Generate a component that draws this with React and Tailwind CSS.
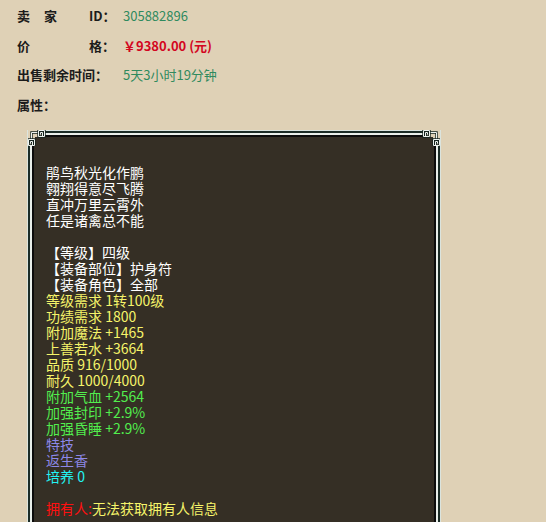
import React from 'react';

const BG = '#DFD1B6';

const poem = ['鹃鸟秋光化作鹏', '翱翔得意尽飞腾', '直冲万里云霄外', '任是诸禽总不能'];

const attrs = [
    { t: '', c: 'text-white' },
    { t: '【等级】四级', c: 'text-white' },
    { t: '【装备部位】护身符', c: 'text-white' },
    { t: '【装备角色】全部', c: 'text-white' },
    { t: '等级需求 1转100级', c: 'text-[#f6f46a]' },
    { t: '功绩需求 1800', c: 'text-[#f6f46a]' },
    { t: '附加魔法 +1465', c: 'text-[#f6f46a]' },
    { t: '上善若水 +3664', c: 'text-[#f6f46a]' },
    { t: '品质 916/1000', c: 'text-[#f6f46a]' },
    { t: '耐久 1000/4000', c: 'text-[#f6f46a]' },
    { t: '附加气血 +2564', c: 'text-[#52ee4e]' },
    { t: '加强封印 +2.9%', c: 'text-[#52ee4e]' },
    { t: '加强昏睡 +2.9%', c: 'text-[#52ee4e]' },
    { t: '特技', c: 'text-[#8d88e8]' },
    { t: '返生香', c: 'text-[#8d88e8]' },
    { t: '培养 0', c: 'text-[#22f4f4]' },
    { t: '', c: 'text-white' },
];

function Fret({ x, y }) {
    const d = `M${x + 0.5} ${y + 0.5} H${x + 6.5} V${y + 6.5} H${x + 0.5} Z M${x + 2.5} ${y + 6.5} V${y + 2.5} H${x + 4.5} V${y + 4.5}`;
    return (
        <g>
            <path d={d} stroke="#16241f" strokeWidth="2.4" fill="none" />
            <path d={d} stroke="#eef3ef" strokeWidth="1" fill="none" />
        </g>
    );
}

function Corner({ flip }) {
    return (
        <svg
            width="18"
            height="16"
            viewBox="0 0 18 16"
            className={`absolute top-[-1px] ${flip ? 'left-0 -scale-x-100' : 'right-0'}`}
        >
            <path d="M2 0 H18 V16 H11 V7 H2 Z" fill={BG} />
            <path d="M8 2.5 H14.5 V10" stroke="#16241f" strokeWidth="2.4" fill="none" />
            <path d="M8 2.5 H14.5 V10" stroke="#eef3ef" strokeWidth="1" fill="none" />
            <Fret x={1} y={0} />
            <Fret x={11} y={9} />
        </svg>
    );
}

export default function App() {
    return (
        <div className="min-h-screen bg-[#DFD1B6] font-['Noto_Sans_CJK_SC',sans-serif] overflow-hidden">
            <div className="pt-px pl-[17px] text-[13px] text-[#1b1b1b] font-bold">
                <div className="h-[29.5px] flex items-center">
                    <span className="w-[27px]">卖</span>
                    <span className="w-[45px]">家</span>
                    <span className="w-[34px]">ID：</span>
                    <span className="font-normal text-[#2f8a5e]">305882896</span>
                </div>
                <div className="h-[29.5px] flex items-center">
                    <span className="w-[72px]">价</span>
                    <span className="w-[34px]">格：</span>
                    <span className="text-[#d3061f]">￥9380.00 (元)</span>
                </div>
                <div className="h-[29.5px] flex items-center">
                    <span className="w-[106px]">出售剩余时间：</span>
                    <span className="font-normal text-[#2f8a5e]">5天3小时19分钟</span>
                </div>
                <div className="h-[29.5px] flex items-center">
                    <span>属性：</span>
                </div>
            </div>

            <div className="relative mt-[11px] ml-[27px] w-[414px] border border-b-0 border-[#dbe4de]">
                <div className="border-2 border-b-0 border-[#1b2c27]">
                    <div className="border-2 border-b-0 border-[#e9efea]">
                        <div className="border-2 border-b-0 border-[#0c0c0c] bg-[#352F25] pl-[12px] pt-[27px] pb-6 text-[14px] leading-[16px]">
                            {poem.map((l) => (
                                <div key={l} className="text-white">{l}</div>
                            ))}
                            {attrs.map((a, i) => (
                                <div key={i} className={`${a.c} h-4 whitespace-pre`}>{a.t}</div>
                            ))}
                            <div>
                                <span className="text-[#ff1010]">拥有人:</span>
                                <span className="text-[#f6f46a]">无法获取拥有人信息</span>
                            </div>
                        </div>
                    </div>
                </div>
                <Corner />
                <Corner flip />
            </div>
        </div>
    );
}
